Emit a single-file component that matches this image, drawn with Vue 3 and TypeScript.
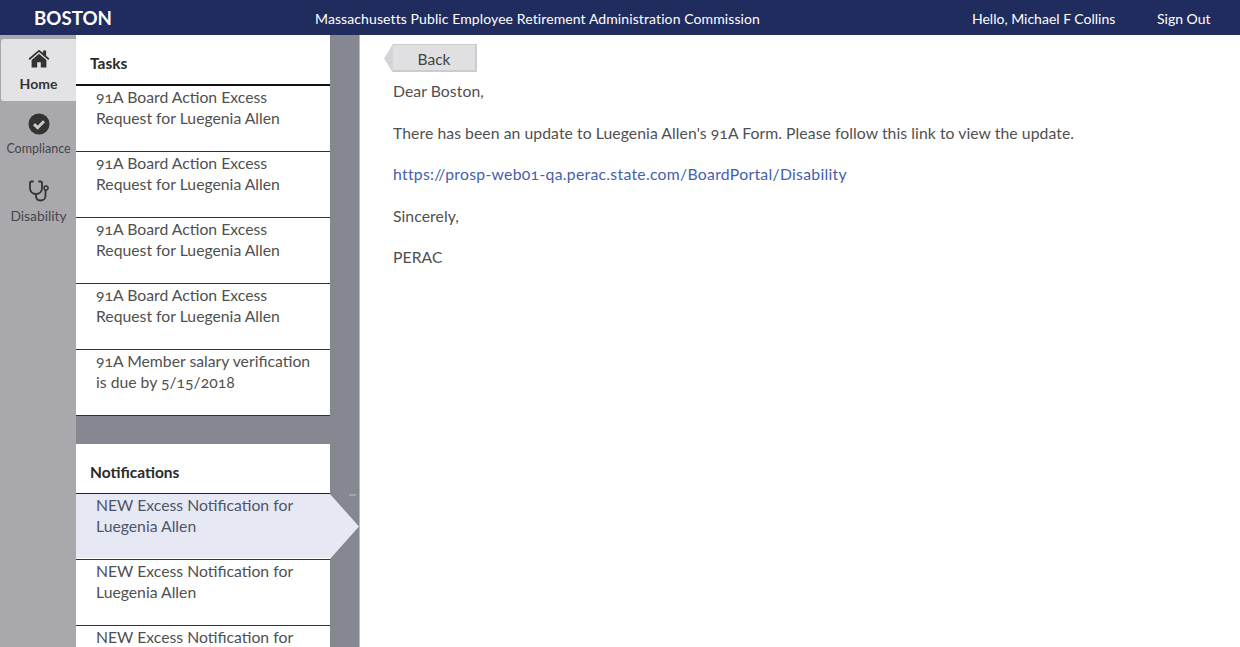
<script setup lang="ts">
const tasks: string[] = [
  '91A Board Action Excess Request for Luegenia Allen',
  '91A Board Action Excess Request for Luegenia Allen',
  '91A Board Action Excess Request for Luegenia Allen',
  '91A Board Action Excess Request for Luegenia Allen',
  '91A Member salary verification is due by 5/15/2018',
]

const notifications: string[] = [
  'NEW Excess Notification for Luegenia Allen',
  'NEW Excess Notification for Luegenia Allen',
  'NEW Excess Notification for Luegenia Allen',
]
</script>

<template>
  <div class="page">
    <header class="topbar">
      <div class="brand">BOSTON</div>
      <div class="org">Massachusetts Public Employee Retirement Administration Commission</div>
      <div class="user">Hello, Michael F Collins</div>
      <a class="signout">Sign Out</a>
    </header>

    <div class="body">
      <nav class="rail">
        <a class="rail-item active">
          <svg class="rail-icon" width="22" height="20" viewBox="0 0 22 20">
            <path fill="#333" d="M11 .8 .6 9.6l1.100 1.300L11 3.100l9.300 7.800 1.100-1.300-3.300-2.800V1.500h-3v2.600z" />
            <path fill="#333" d="M11 4.800 3.600 11v7.600h5.600v-5.400h3.600v5.400h5.600V11z" />
          </svg>
          <span>Home</span>
        </a>
        <a class="rail-item">
          <svg class="rail-icon" width="22" height="22" viewBox="0 0 22 22">
            <circle cx="11" cy="11" r="10.500" fill="#333" />
            <path fill="none" stroke="#c9c9cc" stroke-width="3" d="m6 11.200 3.600 3.500 6.400-6.400" />
          </svg>
          <span class="small">Compliance</span>
        </a>
        <a class="rail-item">
          <svg class="rail-icon" width="22" height="22" viewBox="0 0 22 22">
            <path fill="none" stroke="#333" stroke-width="1.800" stroke-linecap="round" d="M5 1.500H3.500Q2 1.500 2 3v5c0 3.600 2.600 6 6 6s6-2.400 6-6V3q0-1.500-1.500-1.500H11" />
            <path fill="none" stroke="#333" stroke-width="1.800" d="M8 14v2c0 3 2 4.500 4.500 4.500s5-1.500 5-4.500v-6" />
            <circle cx="18" cy="8" r="2" fill="none" stroke="#333" stroke-width="1.500" />
          </svg>
          <span class="wide">Disability</span>
        </a>
      </nav>

      <aside class="lists">
        <section class="panel">
          <h2 class="panel-title">Tasks</h2>
          <a v-for="(t, i) in tasks" :key="i" class="item">{{ t }}</a>
        </section>
        <section class="panel notif">
          <h2 class="panel-title thin">Notifications</h2>
          <a v-for="(n, i) in notifications" :key="i" class="item" :class="{ selected: i === 0 }">{{ n }}</a>
        </section>
      </aside>

      <main class="content">
        <button class="back">Back</button>
        <p>Dear Boston,</p>
        <p>There has been an update to Luegenia Allen's 91A Form. Please follow this link to view the update.</p>
        <p><a class="link">https://prosp-web01-qa.perac.state.com/BoardPortal/Disability</a></p>
        <p>Sincerely,</p>
        <p>PERAC</p>
      </main>
    </div>
  </div>
</template>

<style>
html,
body {
  margin: 0;
  overflow: hidden;
}
</style>

<style scoped>
.page {
  height: 647px;
  display: flex;
  flex-direction: column;
  overflow: hidden;
  background: #fff;
  font-family: Lato, "Open Sans", sans-serif;
  font-variant-numeric: oldstyle-nums;
  color: #444;
}

.topbar {
  flex: 0 0 35px;
  display: flex;
  align-items: center;
  background: #202c5e;
  color: #fff;
  font-size: 14px;
  padding-top: 1px;
  box-sizing: border-box;
}
.brand {
  width: 315px;
  box-sizing: border-box;
  padding-left: 34px;
  font-size: 18.700px;
  font-weight: 700;
  margin-top: -1px;
}
.org {
  width: 657px;
  letter-spacing: 0.1px;
}
.user {
  width: 185px;
}
.signout {
  color: #fff;
}

.body {
  flex: 1;
  display: flex;
  min-height: 0;
}

.rail {
  flex: 0 0 76px;
  background: #a9a9ad;
  padding-top: 4px;
  display: flex;
  flex-direction: column;
  box-sizing: border-box;
}
.rail-item {
  height: 67px;
  margin-left: 1px;
  display: flex;
  flex-direction: column;
  align-items: center;
  font-size: 13px;
  color: #45454a;
  padding-top: 10px;
  box-sizing: border-box;
  white-space: nowrap;
}
.rail-item .small {
  font-size: 12.500px;
  margin-top: 1px;
}
.rail-item .wide {
  font-size: 13.800px;
}
.rail-item.active {
  height: 62px;
  margin-bottom: 2px;
  padding-top: 9px;
  background: #e3e3e5;
  border-radius: 3px 0 0 3px;
  font-weight: 700;
  font-size: 14px;
  color: #333;
}
.rail-icon {
  display: block;
  height: 22px;
  margin-bottom: 5px;
}

.lists {
  flex: 0 0 284px;
  box-sizing: border-box;
  padding-right: 29px;
  background: #858890;
  border-right: 1px solid #b9bbc0;
  display: flex;
  flex-direction: column;
  gap: 28px;
}
.panel {
  background: #fff;
}
.notif {
  flex-shrink: 0;
}
.panel-title {
  margin: 0;
  height: 51px;
  box-sizing: border-box;
  padding: 18px 0 0 14px;
  font-size: 15.500px;
  line-height: 20px;
  font-weight: 700;
  color: #2a2a2a;
  border-bottom: 2px solid #111;
}
.panel-title.thin {
  height: 50px;
  border-bottom: 1px solid #222;
}
.item {
  position: relative;
  display: block;
  height: 66px;
  box-sizing: border-box;
  padding: 0 14px 0 20px;
  font-size: 15.750px;
  line-height: 21px;
  color: #505050;
  border-bottom: 1px solid #333;
}
.item.selected {
  background: #e6e8f4;
  color: #505568;
  box-shadow: inset 0 -1px #fff;
}
.item.selected::after {
  content: "";
  position: absolute;
  top: 0;
  right: -29px;
  width: 29px;
  height: 65px;
  background: #e6e8f4;
  clip-path: polygon(0 0, 100% 50%, 0 100%);
}
.item.selected::before {
  content: "";
  position: absolute;
  top: 0;
  right: -26px;
  width: 7px;
  height: 2px;
  background: #a3a5ab;
}

.content {
  flex: 1;
  padding: 9px 0 0 33px;
  font-size: 15.750px;
  letter-spacing: 0.06px;
  line-height: 21px;
  color: #505050;
}
.content p {
  margin: 0 0 20.500px;
}
.back {
  display: block;
  position: relative;
  width: 84px;
  height: 28px;
  margin: 0 0 8px 0;
  padding: 3px 0 0 0;
  border: 0;
  border-top: 1px solid #ccc;
  border-right: 2px solid #ccc;
  border-bottom: 2px solid #ccc;
  background: #e0e0e2;
  font: inherit;
  font-size: 15.500px;
  color: #444;
  text-align: center;
}
.back::before {
  content: "";
  position: absolute;
  left: -9px;
  top: -1px;
  width: 9px;
  height: 29px;
  background: #d4d4d6;
  clip-path: polygon(100% 0, 0 50%, 100% 100%);
}
.link {
  color: #4460ac;
  letter-spacing: 0.29px;
}
</style>
